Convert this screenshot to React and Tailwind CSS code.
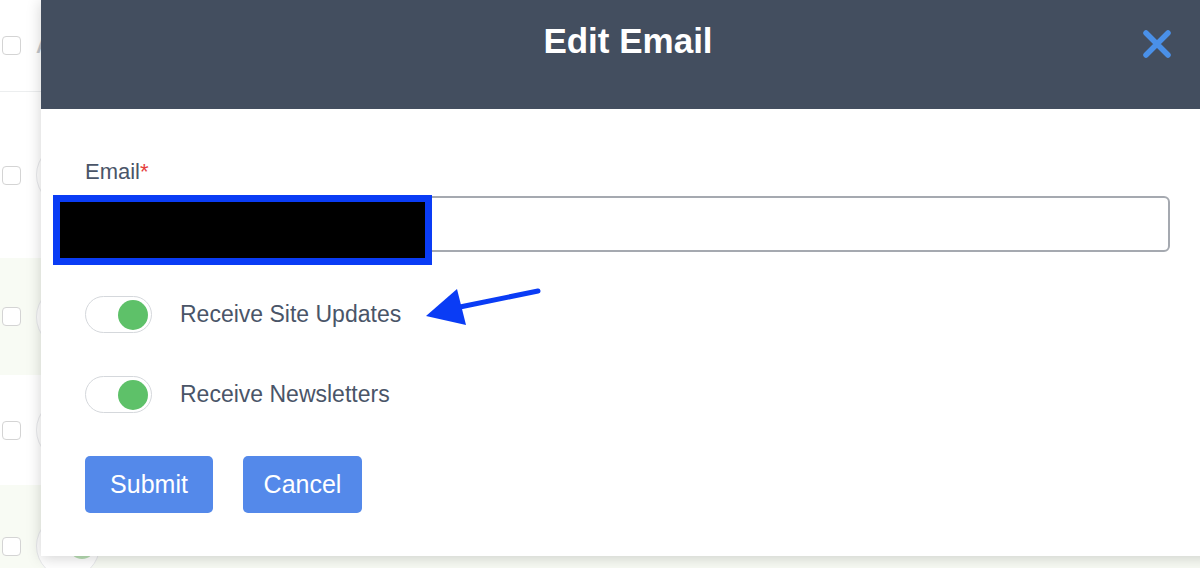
import React from 'react';

const rows = [
    { h: 'h-[92px]', bg: 'bg-white', border: true, header: true },
    { h: 'h-[166px]', bg: 'bg-white' },
    { h: 'h-[117px]', bg: 'bg-[#f8fbf4]' },
    { h: 'h-[110px]', bg: 'bg-white' },
    { h: 'h-[122px]', bg: 'bg-[#f8fbf4]', green: true },
];

const Toggle = () => (
    <div className="w-[67px] h-[37px] rounded-full border-[1.5px] border-[#d5d8dc] bg-white flex items-center justify-end pr-[3px] shrink-0">
        <div className="w-[30px] h-[30px] rounded-full bg-[#5ec169]"></div>
    </div>
);

export default function App() {
    return (
        <div className="relative w-[1200px] h-[568px] overflow-hidden bg-[#eef1ec] font-['Liberation_Sans',Arial,sans-serif]">
            {/* page behind the modal */}
            <div className="flex flex-col">
                {rows.map((row, i) => (
                    <div key={i} className={`${row.h} ${row.bg} ${row.border ? 'border-b border-[#eceeef]' : ''} flex items-center pl-[2px] gap-[15px] shrink-0`}>
                        <div className="w-[19px] h-[19px] rounded-[4px] border-[1.5px] border-[#d4d4d4] bg-white shrink-0"></div>
                        {row.header ? (
                            <span className="text-[20px] font-bold text-[#c4c7cb]">Avatar</span>
                        ) : (
                            <div className="w-[64px] h-[64px] rounded-full border-[1.5px] border-[#e8e9ec] bg-white flex items-center justify-end pr-[4px] shrink-0">
                                {row.green && <div className="w-[26px] h-[26px] rounded-full bg-[#b9dfb5]"></div>}
                            </div>
                        )}
                    </div>
                ))}
            </div>

            {/* modal */}
            <div className="absolute left-[41px] top-0 w-[1174px] h-[556px] bg-white shadow-[0_2px_14px_rgba(0,0,0,0.18)] flex flex-col">
                <div className="relative h-[109px] bg-[#434e5f] flex justify-center pt-[23px] shrink-0">
                    <h1 className="text-[35px] leading-none font-bold text-white">Edit Email</h1>
                    <button className="absolute right-[42px] top-[28px] w-[32px] h-[32px] flex items-center justify-center">
                        <svg width="32" height="32" viewBox="0 0 32 32">
                            <path d="M5 5 L27 27 M27 5 L5 27" stroke="#4a90e8" strokeWidth="5.5" strokeLinecap="round" />
                        </svg>
                    </button>
                </div>

                <div className="flex flex-col pl-[44px] pr-[45px] pt-[52px] text-[#4a5568]">
                    <label className="text-[22px] leading-none">
                        Email<span className="text-[#e53e3e]">*</span>
                    </label>
                    <input className="mt-[13px] h-[56px] w-full rounded-[6px] border-2 border-[#a5a9b0] bg-white px-3 outline-none" />

                    <div className="mt-[44px] flex items-center gap-[28px]">
                        <Toggle />
                        <span className="text-[23px] leading-none">Receive Site Updates</span>
                    </div>
                    <div className="mt-[43px] flex items-center gap-[28px]">
                        <Toggle />
                        <span className="text-[23px] leading-none">Receive Newsletters</span>
                    </div>

                    <div className="mt-[43px] flex gap-[30px]">
                        <button className="w-[128px] h-[57px] rounded-[5px] bg-[#5489ea] text-white text-[25px]">Submit</button>
                        <button className="w-[119px] h-[57px] rounded-[5px] bg-[#5489ea] text-white text-[25px]">Cancel</button>
                    </div>
                </div>
            </div>

            {/* redaction box over the email value */}
            <div className="absolute left-[53px] top-[195px] w-[379px] h-[70px] border-[7px] border-[#0a3cf5] bg-black"></div>

            {/* annotation arrow */}
            <svg className="absolute left-0 top-0 pointer-events-none" width="1200" height="568">
                <line x1="538" y1="291" x2="455" y2="308" stroke="#0a3cf5" strokeWidth="5" strokeLinecap="round" />
                <polygon points="426,316 457,289 466,325" fill="#0a3cf5" />
            </svg>
        </div>
    );
}
